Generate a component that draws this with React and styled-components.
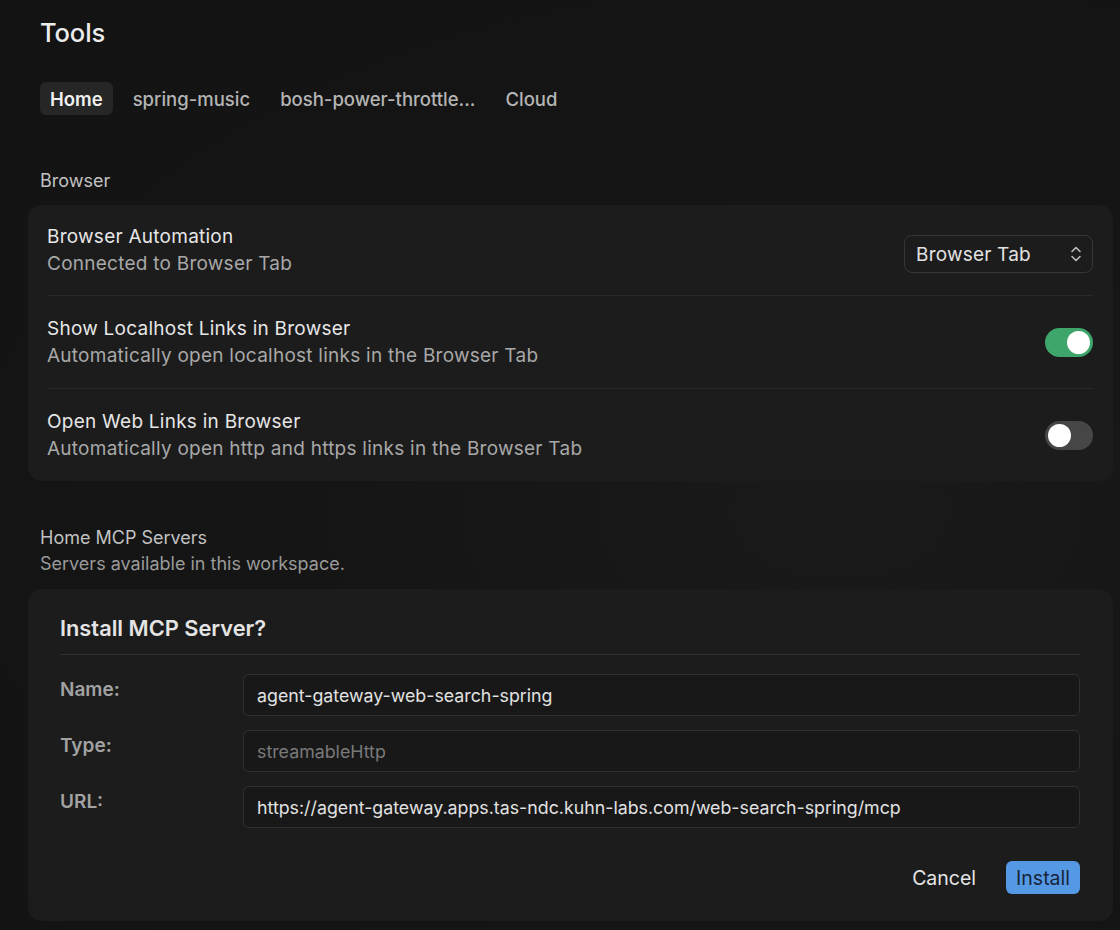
import React from "react";
import styled, { createGlobalStyle } from "styled-components";

const Global = createGlobalStyle`
  html, body { margin: 0; padding: 0; background: #141414; }
  body { font-family: Inter, "Noto Sans", sans-serif; -webkit-font-smoothing: antialiased; }
  * { box-sizing: border-box; }
`;

const Page = styled.div`
  width: 1120px;
  min-height: 930px;
  background: radial-gradient(ellipse at 75% 55%, #1a1a1a 0%, #151515 45%, #131313 100%);
  padding: 17px 7px 10px 28px;
  color: #e6e6e6;
`;

const Title = styled.h1`
  margin: 0 0 0 12px;
  font-size: 25.5px;
  font-weight: 500;
  line-height: 31px;
  color: #ececec;
  letter-spacing: -0.1px;
`;

const Tabs = styled.div`
  display: flex;
  gap: 10px;
  margin: 34px 0 0 12px;
`;

const Tab = styled.div`
  height: 33px;
  padding: 0 10px;
  border-radius: 6px;
  display: flex;
  align-items: center;
  font-size: 18.5px;
  font-weight: ${(p) => (p.$active ? 600 : 500)};
  color: ${(p) => (p.$active ? "#f0f0f0" : "#b4b4b4")};
  background: ${(p) => (p.$active ? "#262626" : "transparent")};
`;

const SectionLabel = styled.div`
  margin: ${(p) => p.$mt || "53px"} 0 0 12px;
  font-size: 18px;
  line-height: 26px;
  color: #c2c2c2;
`;

const SectionSub = styled.div`
  margin-left: 12px;
  font-size: 18px;
  line-height: 26px;
  color: #9a9a9a;
`;

const Card = styled.div`
  margin-top: ${(p) => p.$mt || "11px"};
  background: #1c1c1c;
  border-radius: 14px;
  padding: ${(p) => p.$pad || "0 20px 0 19px"};
`;

const Row = styled.div`
  display: flex;
  align-items: center;
  justify-content: space-between;
  padding: ${(p) => p.$pad || "19px 0"};
  border-top: ${(p) => (p.$first ? "none" : "1px solid #2a2a2a")};
`;

const RowText = styled.div`
  display: flex;
  flex-direction: column;
`;

const RowTitle = styled.div`
  font-size: 19px;
  line-height: 27px;
  letter-spacing: 0.25px;
  color: #e6e6e6;
`;

const RowSub = styled.div`
  font-size: 19px;
  line-height: 27px;
  letter-spacing: 0.25px;
  color: #a8a8a8;
`;

const Select = styled.div`
  width: 189px;
  height: 38px;
  margin-top: 8px;
  border: 1px solid #363636;
  border-radius: 8px;
  display: flex;
  align-items: center;
  justify-content: space-between;
  padding: 0 9px 0 11px;
  font-size: 19px;
  letter-spacing: 0.2px;
  color: #e2e2e2;
`;

const Switch = styled.div`
  width: 48px;
  height: 29px;
  border-radius: 15px;
  background: ${(p) => (p.$on ? "#3ea66b" : "#464646")};
  display: flex;
  align-items: center;
  justify-content: ${(p) => (p.$on ? "flex-end" : "flex-start")};
  padding: 0 3px;
`;

const Knob = styled.div`
  width: 23px;
  height: 23px;
  border-radius: 50%;
  background: #ffffff;
`;

const DialogTitle = styled.div`
  font-size: 21.8px;
  font-weight: 600;
  line-height: 28px;
  color: #e4e4e4;
  padding-bottom: 12px;
  border-bottom: 1px solid #2e2e2e;
`;

const Form = styled.div`
  display: grid;
  grid-template-columns: 183px 1fr;
  row-gap: 14px;
  margin-top: 19px;
`;

const FieldLabel = styled.div`
  font-size: 19px;
  font-weight: 600;
  color: #a2a2a2;
  line-height: 24px;
  padding-top: 4px;
`;

const Field = styled.div`
  height: 42px;
  border: 1px solid #2f2f2f;
  border-radius: 6px;
  background: #181818;
  display: flex;
  align-items: center;
  padding: 0 13px;
  font-size: 17.8px;
  color: ${(p) => (p.$muted ? "#7a7a7a" : "#e2e2e2")};
`;

const Actions = styled.div`
  display: flex;
  justify-content: flex-end;
  align-items: center;
  gap: 30px;
  margin-top: 33px;
`;

const Button = styled.div`
  height: 33px;
  padding: 0 ${(p) => (p.$primary ? "10px" : "0")};
  border-radius: 6px;
  display: flex;
  align-items: center;
  font-size: 19.5px;
  color: ${(p) => (p.$primary ? "#16243a" : "#e4e4e4")};
  background: ${(p) => (p.$primary ? "#5599e4" : "transparent")};
`;

const Chevrons = () => (
  <svg width="14" height="22" viewBox="0 0 14 22" fill="none" stroke="#bdbdbd" strokeWidth="1.6" strokeLinecap="round" strokeLinejoin="round">
    <path d="M3 8.5 L7 4.5 L11 8.5" />
    <path d="M3 13.5 L7 17.5 L11 13.5" />
  </svg>
);

export default function App() {
  return (
    <Page>
      <Global />
      <Title>Tools</Title>
      <Tabs>
        <Tab $active>Home</Tab>
        <Tab>spring-music</Tab>
        <Tab>bosh-power-throttle...</Tab>
        <Tab>Cloud</Tab>
      </Tabs>

      <SectionLabel>Browser</SectionLabel>
      <Card>
        <Row $first $pad="18px 0 18px">
          <RowText>
            <RowTitle>Browser Automation</RowTitle>
            <RowSub>Connected to Browser Tab</RowSub>
          </RowText>
          <Select>
            Browser Tab
            <Chevrons />
          </Select>
        </Row>
        <Row>
          <RowText>
            <RowTitle>Show Localhost Links in Browser</RowTitle>
            <RowSub>Automatically open localhost links in the Browser Tab</RowSub>
          </RowText>
          <Switch $on>
            <Knob />
          </Switch>
        </Row>
        <Row>
          <RowText>
            <RowTitle>Open Web Links in Browser</RowTitle>
            <RowSub>Automatically open http and https links in the Browser Tab</RowSub>
          </RowText>
          <Switch>
            <Knob />
          </Switch>
        </Row>
      </Card>

      <SectionLabel $mt="44px">Home MCP Servers</SectionLabel>
      <SectionSub>Servers available in this workspace.</SectionSub>
      <Card $mt="12px" $pad="25px 33px 27px 32px">
        <DialogTitle>Install MCP Server?</DialogTitle>
        <Form>
          <FieldLabel>Name:</FieldLabel>
          <Field>agent-gateway-web-search-spring</Field>
          <FieldLabel>Type:</FieldLabel>
          <Field $muted>streamableHttp</Field>
          <FieldLabel>URL:</FieldLabel>
          <Field>https://agent-gateway.apps.tas-ndc.kuhn-labs.com/web-search-spring/mcp</Field>
        </Form>
        <Actions>
          <Button>Cancel</Button>
          <Button $primary>Install</Button>
        </Actions>
      </Card>
    </Page>
  );
}
